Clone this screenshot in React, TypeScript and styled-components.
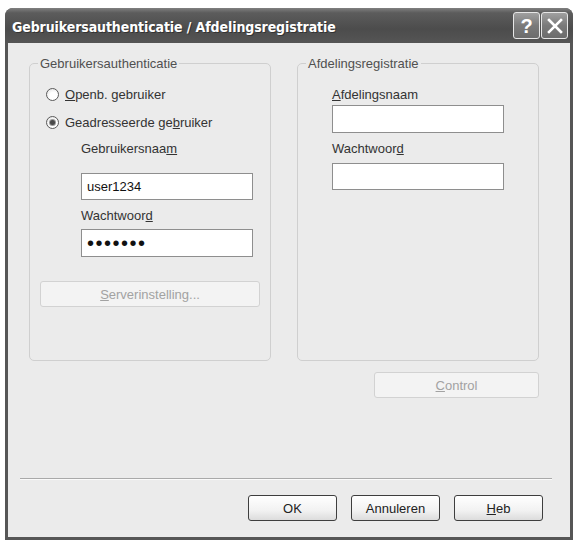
import styled, { createGlobalStyle } from "styled-components";

const GlobalStyle = createGlobalStyle`
  html, body {
    margin: 0;
    padding: 0;
    background: #ffffff;
  }
  body {
    font-family: "Liberation Sans", Arial, sans-serif;
    font-size: 13px;
    color: #222;
  }
`;

const Window = styled.div`
  margin: 8px 0 0 5px;
  width: 568px;
  height: 532px;
  display: flex;
  flex-direction: column;
  border-radius: 8px 8px 0 0;
  overflow: hidden;
  background: #565656;
`;

const TitleBar = styled.div`
  height: 35px;
  flex: none;
  display: flex;
  align-items: center;
  padding: 0 5px 0 7px;
  background: linear-gradient(#808080 0%, #5c5c5c 14%, #4c4c4c 60%, #555 100%);
`;

const Title = styled.div`
  flex: 1;
  padding-top: 3px;
  color: #fff;
  font-family: "DejaVu Sans Condensed", "Liberation Sans", sans-serif;
  font-weight: bold;
  font-size: 14px;
  letter-spacing: -0.1px;
  text-shadow: 1px 1px 0 #333;
`;

const Caption = styled.button`
  width: 27px;
  height: 27px;
  margin-left: 1px;
  padding: 0;
  display: flex;
  align-items: center;
  justify-content: center;
  border: 1px solid #e6e6e6;
  border-radius: 3px;
  background: linear-gradient(#a0a0a0, #7a7a7a 50%, #6c6c6c);
  color: #fff;
  font-family: "Liberation Sans", sans-serif;
  font-weight: bold;
  font-size: 20px;
  line-height: 1;
`;

const Body = styled.div`
  flex: 1;
  margin: 0 3px 3px;
  background: #ebebeb;
  display: flex;
  flex-direction: column;
`;

const Groups = styled.div`
  display: grid;
  grid-template-columns: 242px 242px;
  column-gap: 26px;
  padding: 13px 0 0 21px;
`;

const Group = styled.fieldset`
  margin: 0;
  padding: 0;
  height: 305px;
  box-sizing: border-box;
  border: 1px solid #cfcfcf;
  border-radius: 5px;
  min-width: 0;
`;

const Legend = styled.legend`
  margin-left: 8px;
  padding: 0 2px;
  line-height: 15px;
  color: #505050;
`;

const Stack = styled.div<{ $indent: number }>`
  display: flex;
  flex-direction: column;
  align-items: flex-start;
  padding-left: ${(p) => p.$indent}px;
`;

const RadioRow = styled.label<{ $top: number }>`
  display: flex;
  align-items: center;
  gap: 6px;
  height: 16px;
  margin-top: ${(p) => p.$top}px;
  color: #333;
`;

const RadioDot = styled.span<{ $on?: boolean }>`
  position: relative;
  width: 13px;
  height: 13px;
  box-sizing: border-box;
  border: 1px solid #5a5a5a;
  border-radius: 50%;
  background: radial-gradient(circle at 60% 65%, #fff 40%, #dcdcdc 100%);

  &::after {
    content: "";
    display: ${(p) => (p.$on ? "block" : "none")};
    position: absolute;
    left: 3px;
    top: 3px;
    width: 5px;
    height: 5px;
    border-radius: 50%;
    background: #4a4a4a;
    box-shadow: 0 0 0 1px #9a9a9a;
  }
`;

const FieldLabel = styled.div<{ $top: number }>`
  line-height: 16px;
  margin-top: ${(p) => p.$top}px;
  color: #333;
`;

const TextBox = styled.input<{ $top: number; $h: number; $dots?: boolean }>`
  box-sizing: border-box;
  width: 172px;
  height: ${(p) => p.$h}px;
  margin: ${(p) => p.$top}px 0 0;
  padding: 0 5px;
  border: 1px solid #8e8e8e;
  border-radius: 0;
  background: #fff;
  outline: none;
  font-family: "Liberation Sans", Arial, sans-serif;
  font-size: ${(p) => (p.$dots ? "20px" : "13px")};
  letter-spacing: ${(p) => (p.$dots ? "1.5px" : "0")};
  color: #111;
`;

const PushButton = styled.button<{ $w: number; $off?: boolean }>`
  box-sizing: border-box;
  width: ${(p) => p.$w}px;
  height: 26px;
  padding: 0;
  border: 1px solid ${(p) => (p.$off ? "#d2d2d2" : "#3e3e3e")};
  border-radius: 3px;
  background: ${(p) =>
    p.$off ? "#f3f3f3" : "linear-gradient(#ffffff, #f2f2f2 60%, #dcdcdc)"};
  color: ${(p) => (p.$off ? "#a2a2a2" : "#222")};
  font-family: "Liberation Sans", Arial, sans-serif;
  font-size: 13px;
`;

const ServerButton = styled(PushButton)`
  margin: 24px 0 0 -41px;
`;

const ControlRow = styled.div`
  display: flex;
  justify-content: flex-end;
  padding: 11px 31px 0 0;
`;

const Separator = styled.div`
  margin: auto 18px 0 12px;
  height: 1px;
  background: #a9a9a9;
  border-bottom: 1px solid #fafafa;
`;

const ButtonRow = styled.div`
  display: flex;
  justify-content: flex-end;
  gap: 14px;
  padding: 15px 27px 16px 0;
`;

export default function App() {
  return (
    <>
      <GlobalStyle />
      <Window>
        <TitleBar>
          <Title>Gebruikersauthenticatie / Afdelingsregistratie</Title>
          <Caption aria-label="Help">?</Caption>
          <Caption aria-label="Sluiten">
            <svg width="16" height="16" viewBox="0 0 16 16">
              <path d="M2 2 L14 14 M14 2 L2 14" stroke="#fff" strokeWidth="2.6" strokeLinecap="square" />
            </svg>
          </Caption>
        </TitleBar>
        <Body>
          <Groups>
            <Group>
              <Legend>Gebruikersauthenticatie</Legend>
              <Stack $indent={16}>
                <RadioRow $top={15}>
                  <RadioDot />
                  <span>
                    <u>O</u>penb. gebruiker
                  </span>
                </RadioRow>
                <RadioRow $top={12}>
                  <RadioDot $on />
                  <span>
                    Geadresseerde ge<u>b</u>ruiker
                  </span>
                </RadioRow>
                <Stack $indent={35}>
                  <FieldLabel $top={11}>
                    Gebruikersnaa<u>m</u>
                  </FieldLabel>
                  <TextBox $top={16} $h={27} type="text" value="user1234" readOnly />
                  <FieldLabel $top={8}>
                    Wachtwoor<u>d</u>
                  </FieldLabel>
                  <TextBox $top={5} $h={28} $dots type="password" value="abcdefg" readOnly />
                  <ServerButton $w={220} $off disabled>
                    <u>S</u>erverinstelling...
                  </ServerButton>
                </Stack>
              </Stack>
            </Group>
            <Group>
              <Legend>Afdelingsregistratie</Legend>
              <Stack $indent={34}>
                <FieldLabel $top={16}>
                  <u>A</u>fdelingsnaam
                </FieldLabel>
                <TextBox $top={2} $h={28} type="text" value="" readOnly />
                <FieldLabel $top={8}>
                  Wachtwoor<u>d</u>
                </FieldLabel>
                <TextBox $top={6} $h={27} type="text" value="" readOnly />
              </Stack>
            </Group>
          </Groups>
          <ControlRow>
            <PushButton $w={165} $off disabled>
              <u>C</u>ontrol
            </PushButton>
          </ControlRow>
          <Separator />
          <ButtonRow>
            <PushButton $w={89}>OK</PushButton>
            <PushButton $w={89}>Annuleren</PushButton>
            <PushButton $w={89}>
              <u>H</u>eb
            </PushButton>
          </ButtonRow>
        </Body>
      </Window>
    </>
  );
}
